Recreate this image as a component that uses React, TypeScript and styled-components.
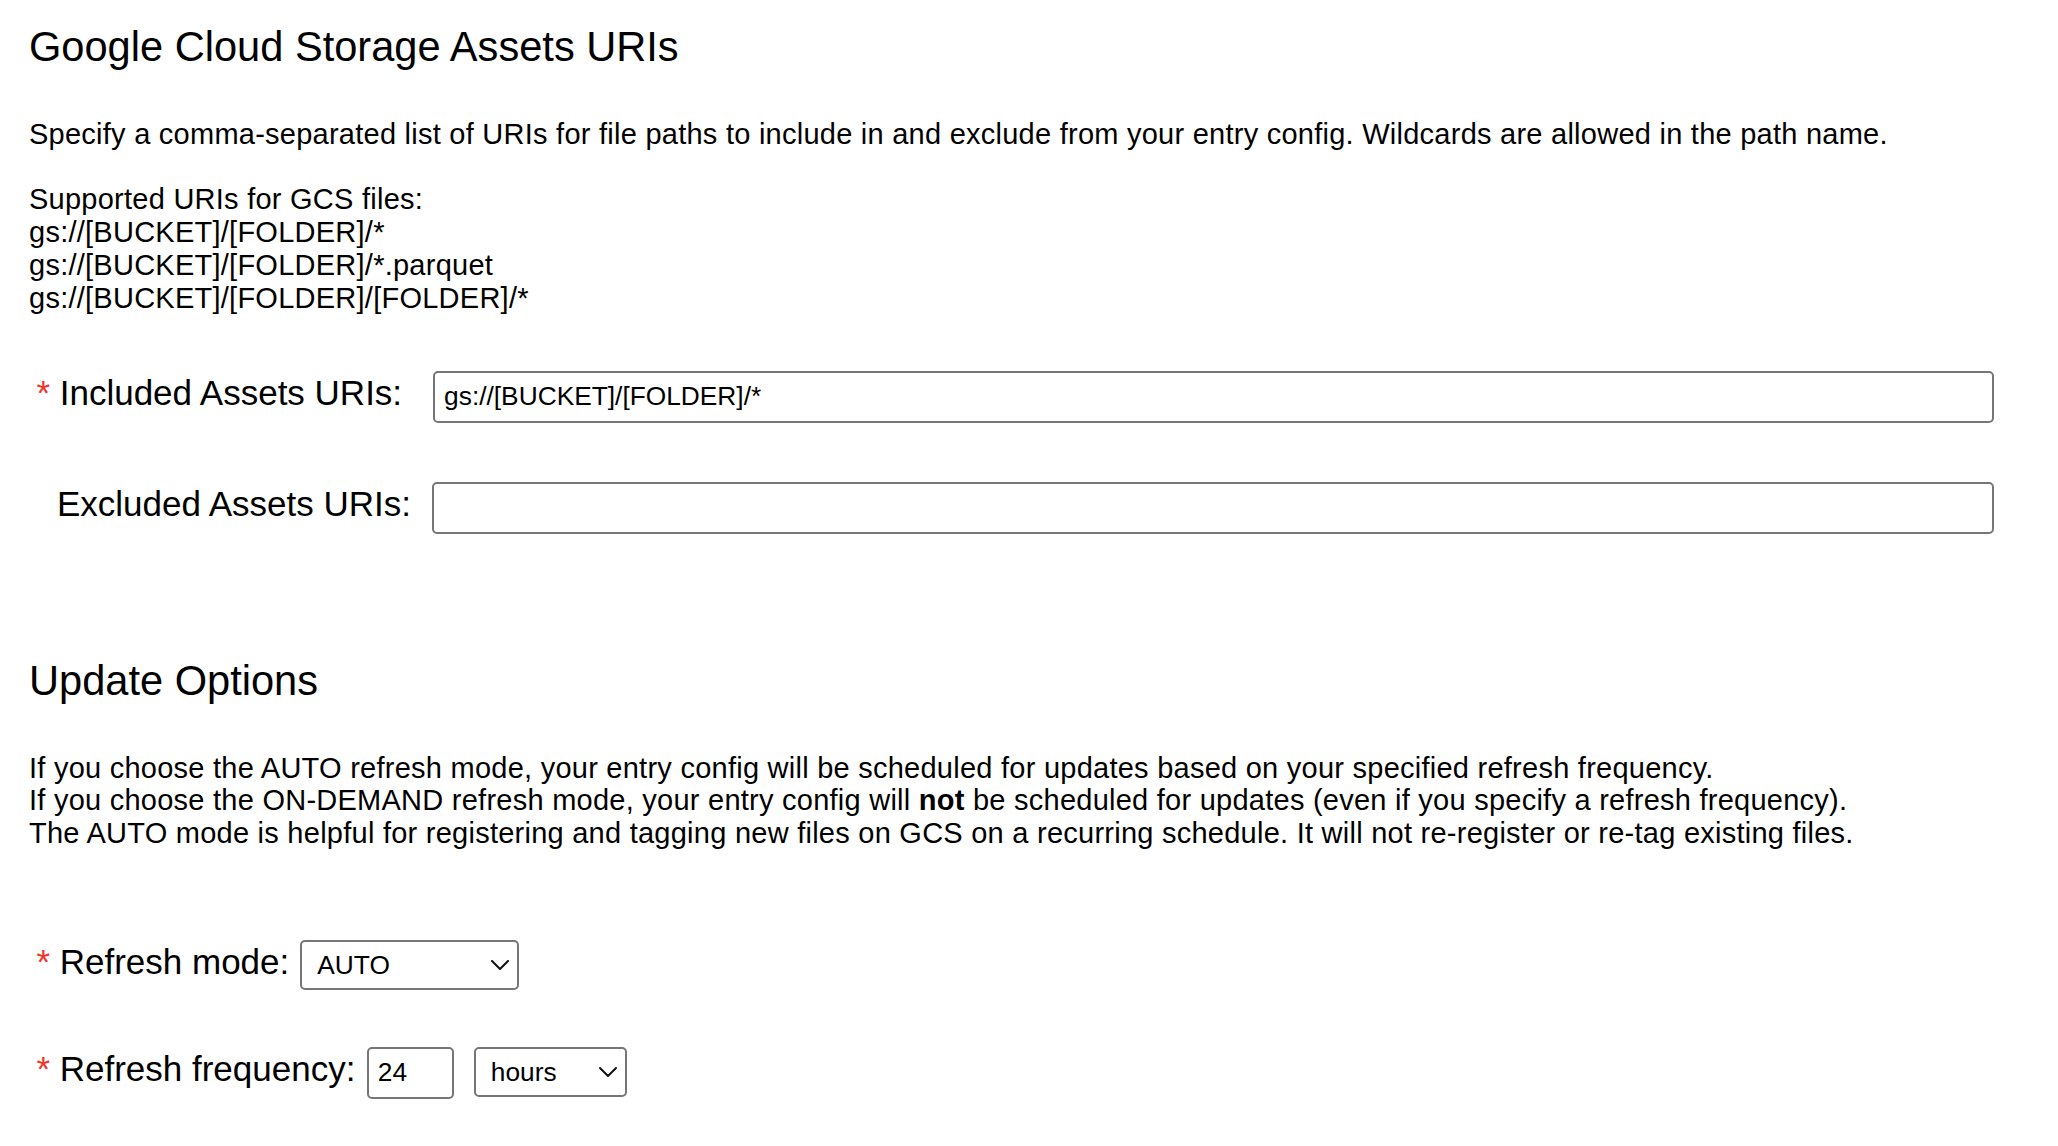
import React from "react";
import styled, { createGlobalStyle } from "styled-components";

const GlobalStyle = createGlobalStyle`
  html, body {
    margin: 0;
    padding: 0;
    background: #ffffff;
  }
  body {
    font-family: "Liberation Sans", Arial, Helvetica, sans-serif;
    color: #000000;
  }
`;

const Page = styled.div`
  display: flex;
  flex-direction: column;
  padding: 23px 64px 40px 28px;
`;

const Heading = styled.h2<{ $top?: number }>`
  margin: ${(p) => p.$top ?? 0}px 0 0 1px;
  font-size: 41.6px;
  font-weight: 400;
  line-height: 47px;
`;

const Description = styled.p`
  margin: 47.7px 0 0 1px;
  font-size: 29px;
  letter-spacing: 0.25px;
  line-height: 32.8px;
`;

const FieldRow = styled.div<{ $top: number; $indent: number }>`
  display: flex;
  align-items: baseline;
  margin-top: ${(p) => p.$top}px;
  padding-left: ${(p) => p.$indent}px;
`;

const Asterisk = styled.span`
  color: #f0352a;
  font-size: 35px;
  line-height: 40px;
  margin-right: 9.6px;
`;

const Label = styled.label<{ $gap: number }>`
  font-size: 35px;
  line-height: 40px;
  white-space: nowrap;
  margin-right: ${(p) => p.$gap}px;
`;

const TextInput = styled.input<{ $width?: number; $gap?: number }>`
  box-sizing: border-box;
  height: 52px;
  ${(p) => (p.$width ? `width: ${p.$width}px; flex: none;` : `flex: 1; min-width: 0;`)}
  margin-right: ${(p) => p.$gap ?? 0}px;
  border: 2px solid #767676;
  border-radius: 5px;
  padding: 0 9px;
  font-family: inherit;
  font-size: 26.3px;
  color: #000000;
  background: #ffffff;
  outline: none;
`;

const SelectWrap = styled.span<{ $width: number }>`
  position: relative;
  display: inline-block;
  flex: none;
  width: ${(p) => p.$width}px;
`;

const Select = styled.select`
  appearance: none;
  -webkit-appearance: none;
  box-sizing: border-box;
  width: 100%;
  height: 50px;
  border: 2px solid #767676;
  border-radius: 5px;
  background: #ffffff;
  padding: 0 40px 0 15px;
  font-family: inherit;
  font-size: 26.3px;
  color: #000000;
  outline: none;
`;

const Chevron = styled.svg`
  position: absolute;
  right: 10px;
  top: 50%;
  transform: translateY(-50%);
  pointer-events: none;
`;

const ChevronIcon = () => (
  <Chevron width="18" height="10" viewBox="0 0 18 10" fill="none">
    <polyline
      points="1,1 9,9 17,1"
      stroke="#111"
      strokeWidth="2"
      strokeLinecap="round"
      strokeLinejoin="round"
      fill="none"
    />
  </Chevron>
);

const Dropdown = ({
  width,
  value,
  options,
}: {
  width: number;
  value: string;
  options: string[];
}) => (
  <SelectWrap $width={width}>
    <Select defaultValue={value}>
      {options.map((o) => (
        <option key={o} value={o}>
          {o}
        </option>
      ))}
    </Select>
    <ChevronIcon />
  </SelectWrap>
);

export default function App() {
  return (
    <>
      <GlobalStyle />
      <Page>
        <Heading>Google Cloud Storage Assets URIs</Heading>
        <Description>
          Specify a comma-separated list of URIs for file paths to include in and exclude from your
          entry config. Wildcards are allowed in the path name.
          <br />
          <br />
          Supported URIs for GCS files:
          <br />
          gs://[BUCKET]/[FOLDER]/*
          <br />
          gs://[BUCKET]/[FOLDER]/*.parquet
          <br />
          gs://[BUCKET]/[FOLDER]/[FOLDER]/*
        </Description>

        <FieldRow $top={56.5} $indent={8.5}>
          <Asterisk>*</Asterisk>
          <Label $gap={31}>Included Assets URIs:</Label>
          <TextInput defaultValue="gs://[BUCKET]/[FOLDER]/*" />
        </FieldRow>

        <FieldRow $top={59} $indent={29}>
          <Label $gap={20.5}>Excluded Assets URIs:</Label>
          <TextInput defaultValue="" />
        </FieldRow>

        <Heading $top={123}>Update Options</Heading>
        <Description>
          If you choose the AUTO refresh mode, your entry config will be scheduled for updates based
          on your specified refresh frequency.
          <br />
          If you choose the ON-DEMAND refresh mode, your entry config will <strong>not</strong> be
          scheduled for updates (even if you specify a refresh frequency).
          <br />
          The AUTO mode is helpful for registering and tagging new files on GCS on a recurring
          schedule. It will not re-register or re-tag existing files.
        </Description>

        <FieldRow $top={89.8} $indent={8.5}>
          <Asterisk>*</Asterisk>
          <Label $gap={11}>Refresh mode:</Label>
          <Dropdown width={219} value="AUTO" options={["AUTO", "ON-DEMAND"]} />
        </FieldRow>

        <FieldRow $top={57} $indent={8.5}>
          <Asterisk>*</Asterisk>
          <Label $gap={11.4}>Refresh frequency:</Label>
          <TextInput $width={87} $gap={20} defaultValue="24" />
          <Dropdown width={153} value="hours" options={["minutes", "hours", "days"]} />
        </FieldRow>
      </Page>
    </>
  );
}
